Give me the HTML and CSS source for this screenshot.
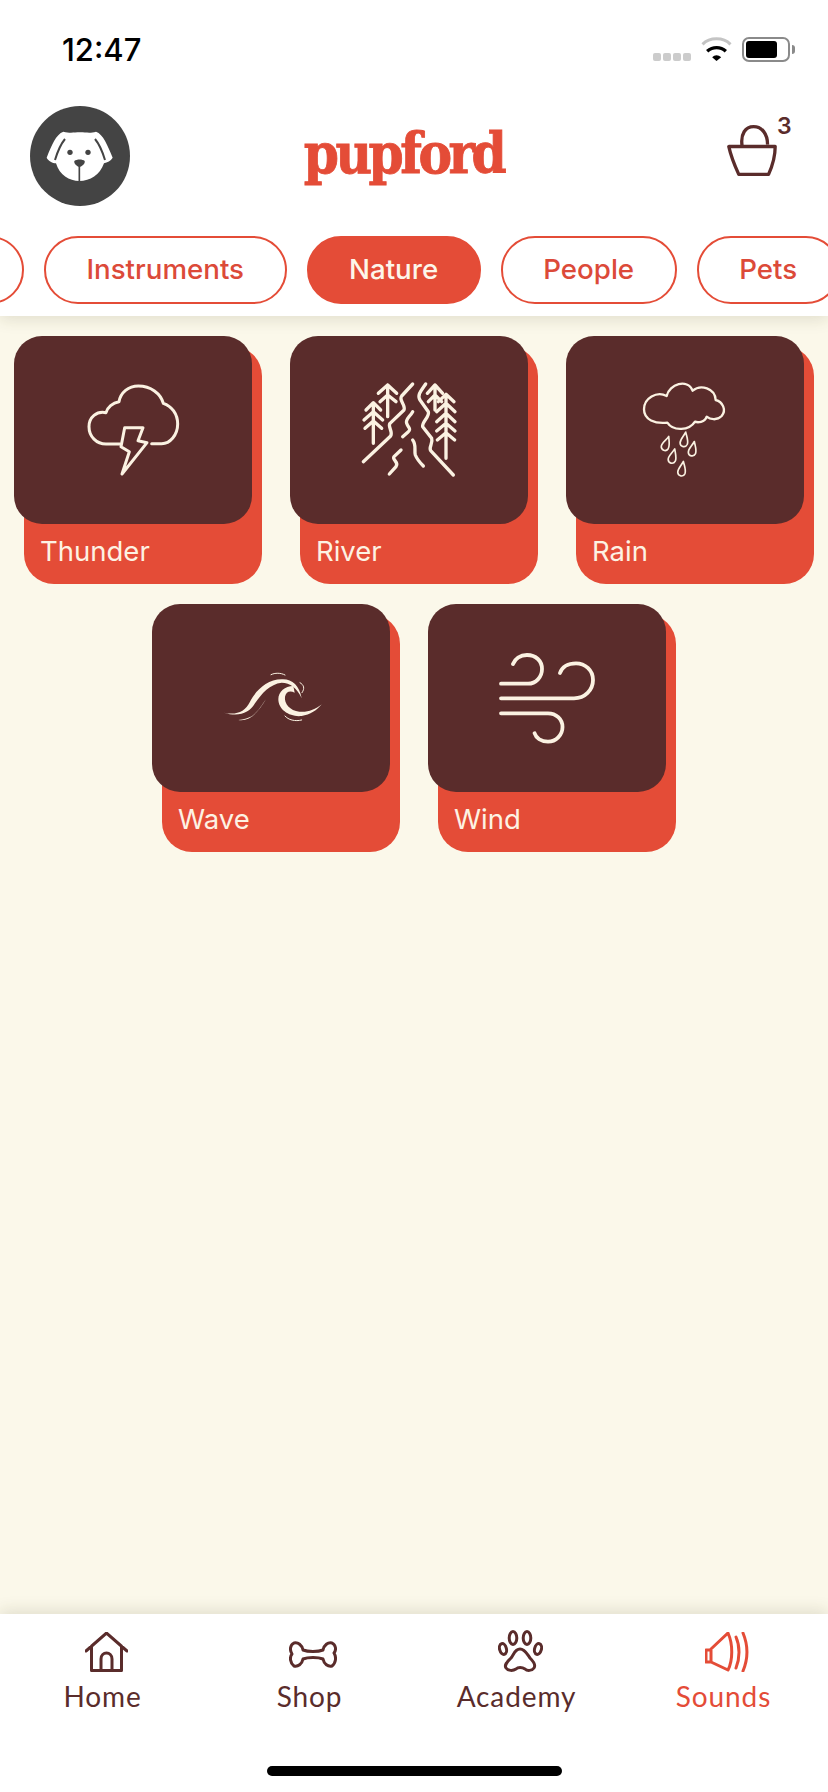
FILE: index.html
```html
<!DOCTYPE html>
<html lang="en">
<head>
    <meta charset="UTF-8">
    <meta name="viewport" content="width=device-width, initial-scale=1.0">
    <title>Pupford Sounds</title>
    <link rel="stylesheet" href="styles.css">
</head>
<body>
    <header class="top">
        <div class="status">
            <span class="time">12:47</span>
            <div class="status-icons">
                <div class="signal"><i></i><i></i><i></i><i></i></div>
                <svg class="wifi" viewBox="180 50 92 72">
                    <path d="M184 72C206 50 246 50 268 72" fill="none" stroke="#c4c4c4" stroke-width="9"/>
                    <path d="M198 93C215 78 238 78 254 93" fill="none" stroke="#000" stroke-width="10"/>
                    <path d="M213 111L226 122L240 111C232 103 220 103 213 111Z" fill="#000"/>
                </svg>
                <div class="battery"><div class="battery-level"></div></div>
                <div class="battery-nub"></div>
            </div>
        </div>
        <div class="brand">
            <svg class="avatar" viewBox="30 33 300 300">
                <circle cx="180" cy="183" r="150" fill="#444"/>
                <path d="M130 110C150 115 160 112 180 112C200 112 212 115 228 110C250 118 262 150 278 188C272 198 262 202 252 205C240 240 210 258 178 258C148 258 118 240 108 205C98 205 85 198 80 188C95 150 108 118 130 110Z" fill="#fff"/>
                <path d="M135 132C120 150 112 172 105 195M225 132C240 150 248 172 255 195" fill="none" stroke="#444" stroke-width="6"/>
                <circle cx="150" cy="172" r="8" fill="#444"/>
                <circle cx="204" cy="172" r="8" fill="#444"/>
                <path d="M163 198C170 192 188 192 194 198C196 206 186 214 178 216C171 214 161 206 163 198Z" fill="#444"/>
                <path d="M178 212V258" stroke="#444" stroke-width="5"/>
            </svg>
            <div class="logo">pupford</div>
            <div class="cart">
                <svg class="bag" viewBox="260 313 150 157">
                    <path d="M305 375C300 340 315 318 340 318C365 318 382 340 382 372M265 378H405C405 410 395 440 385 462H295C285 440 272 410 265 378Z" fill="none" stroke="#5a2c2b" stroke-width="10" stroke-linejoin="round"/>
                </svg>
                <span class="cart-count">3</span>
            </div>
        </div>
        <nav class="pills">
            <a class="pill pill-cut"></a>
            <a class="pill">Instruments</a>
            <a class="pill active">Nature</a>
            <a class="pill">People</a>
            <a class="pill">Pets</a>
        </nav>
    </header>

    <main class="sounds">
        <div class="card">
            <div class="card-back">Thunder</div>
            <div class="card-face">
                <svg viewBox="42 48 714 564">
                    <path d="M455 371H485C510 371 533 345 533 312C533 282 515 258 490 250C482 220 452 198 415 198C385 198 362 218 357 245C338 248 322 262 318 278C290 272 267 292 267 320C267 350 290 372 318 372H360"/>
                    <path d="M374 323H429L414 362L441 368L366 462L388 395L363 380Z"/>
                </svg>
            </div>
        </div>
        <div class="card">
            <div class="card-back">River</div>
            <div class="card-face">
                <svg class="bold" viewBox="-150 -72 714 564">
                    <path d="M100 130V250M78 150L100 128L122 150M72 180L100 155L128 180M75 205L100 183L125 205"/>
                    <path d="M143 75V170M115 100L143 75L170 100M120 125L143 105L168 125"/>
                    <path d="M285 75V150M262 100L285 75L308 100M265 125L285 105L305 125"/>
                    <path d="M318 105V295M295 125L318 103L342 125M290 155L318 130L345 155M290 185L318 160L345 185M290 213L318 190L345 213M292 240L318 218L344 240"/>
                    <path d="M218 72L185 108C175 120 198 135 192 150L150 190C142 200 160 215 152 228L70 305"/>
                    <path d="M257 72C245 90 230 105 240 120L265 155C270 170 245 185 248 200L275 235C280 250 265 262 272 272L340 345"/>
                    <path d="M218 155C210 170 195 178 200 190C205 205 215 205 205 215L188 230"/>
                    <path d="M218 240C230 255 222 270 226 285C232 300 240 308 250 318"/>
                    <path d="M183 270L162 290C155 300 178 305 168 320L148 342"/>
                </svg>
            </div>
        </div>
        <div class="card">
            <div class="card-back">Rain</div>
            <div class="card-face">
                <svg class="light" viewBox="438 48 714 564">
                    <defs>
                        <path id="drop" d="M0 -24C6 -10 13 0 11 11C8 23 -8 23 -11 11C-13 0 -4 -10 0 -24Z"/>
                    </defs>
                    <path d="M742 308C705 312 672 300 672 268C672 235 710 212 740 228C748 192 802 175 818 212C842 192 885 205 887 240C908 245 920 270 905 288C890 303 870 298 860 290C855 308 832 308 825 305C808 332 760 335 742 308Z"/>
                    <g class="drops">
                        <use href="#drop" transform="translate(738 372) rotate(20)"/>
                        <use href="#drop" transform="translate(793 360) rotate(10)"/>
                        <use href="#drop" transform="translate(818 388) rotate(12)"/>
                        <use href="#drop" transform="translate(758 410) rotate(15)"/>
                        <use href="#drop" transform="translate(786 448) rotate(10)"/>
                    </g>
                </svg>
            </div>
        </div>
        <div class="card">
            <div class="card-back">Wave</div>
            <div class="card-face">
                <svg class="solid" viewBox="-174 -168 714 564">
                    <path d="M42 158C80 166 105 155 120 125C135 95 170 58 215 58C245 56 268 75 275 115C262 85 240 68 215 68C180 72 155 100 135 130C118 160 85 172 42 158Z"/>
                    <path d="M250 78C225 78 205 95 205 118C205 150 240 172 275 168C300 165 322 150 335 133C315 150 290 158 268 155C240 152 222 130 225 110C228 95 240 90 254 98Z"/>
                    <path d="M85 180C115 185 140 165 168 118C155 135 148 150 130 165C118 175 100 178 85 180Z"/>
                    <path class="thin" d="M183 44C195 38 212 38 225 45M270 68C282 75 285 85 276 98M225 168C235 180 255 185 275 180"/>
                </svg>
            </div>
        </div>
        <div class="card">
            <div class="card-back">Wind</div>
            <div class="card-face">
                <svg class="wind" viewBox="0 0 238 188">
                    <path d="M73 79.7H100C108 79.7 114 73 114 65C114 57 108 51 99 51C92 51 87 55 85 60"/>
                    <path d="M73 94.3H146C157 94.3 165 86 165 76C165 66 157 59.3 148 59.3C140 59.3 134 63 132 69"/>
                    <path d="M73 109.3H120C128 109.3 134.5 115 134.5 123C134.5 131 128 137.7 120 137.7C113 137.7 108 134 106.6 129.3"/>
                </svg>
            </div>
        </div>
    </main>

    <footer class="tabbar">
        <div class="tabs">
            <a class="tab">
                <svg width="43" height="40" viewBox="1 0 43 40">
                    <path d="M2 19L22.5 1L43 19M7.5 14V38.5H37.5V14M17 38V27C17 19 28 19 28 27V38"/>
                </svg>
                <span>Home</span>
            </a>
            <a class="tab">
                <svg class="bone" width="48" height="27" viewBox="0 0 48 27">
                    <path d="M14 9C19 11 29 11 34 9C35 4 39 1 43 2C47 4 47.5 9 45 12C47.5 16 47 22 43 25C39 26 35 23 34 18C29 16 19 16 14 18C13 23 9 26 5 25C1 22 .5 16 3 13C.5 9 1 4 5 2C9 1 13 4 14 9Z"/>
                </svg>
                <span>Shop</span>
            </a>
            <a class="tab">
                <svg width="45" height="42" viewBox="0 0 45 42">
                    <ellipse cx="5" cy="19" rx="3.4" ry="5.5" transform="rotate(-15 5 19)"/>
                    <ellipse cx="15" cy="8" rx="3.8" ry="6.5"/>
                    <ellipse cx="29" cy="8" rx="3.8" ry="6.5"/>
                    <ellipse cx="40" cy="19" rx="3.4" ry="5.5" transform="rotate(15 40 19)"/>
                    <path d="M22 19C27 19 29 24 32 28C36 32 38 35 36 38C34 41 29 41 27 39C24 37 20 37 18 39C15 41 10 41 8 38C6 35 9 32 13 28C16 24 17 19 22 19Z"/>
                </svg>
                <span>Academy</span>
            </a>
            <a class="tab active">
                <svg width="45" height="40" viewBox="0 0 45 40">
                    <path d="M1 18H6V30H1ZM6 17L23 1C28 12 28 28 23 38L6 30M31 5C35 14 35 26 31 36M38 1C43 13 43 27 38 39"/>
                </svg>
                <span>Sounds</span>
            </a>
        </div>
        <div class="home-bar"></div>
    </footer>
</body>
</html>
```

FILE: styles.css
```css
body {
    font-family: 'Inter', sans-serif;
    background-color: #fbf8ea;
    margin: 0;
    padding: 0;
    width: 828px;
    height: 1792px;
    display: flex;
    flex-direction: column;
    overflow: hidden;
}
.top {
    background-color: white;
    height: 316px;
    box-shadow: 0 4px 14px rgba(60, 60, 20, 0.13);
    position: relative;
    z-index: 1;
}
.status {
    display: flex;
    justify-content: space-between;
    align-items: center;
    height: 50px;
    padding: 24px 33px 0 62px;
}
.time {
    font-size: 31px;
    font-weight: 500;
    color: black;
}
.status-icons {
    display: flex;
    align-items: flex-start;
}
.signal {
    display: flex;
    gap: 2px;
    margin: 16px 10px 0 0;
}
.signal i {
    width: 8px;
    height: 8px;
    background-color: #ccc;
    border-radius: 2px;
}
.wifi {
    width: 31px;
    height: 24px;
    margin-right: 10px;
}
.battery {
    box-sizing: border-box;
    width: 48px;
    height: 25px;
    padding: 2px;
    border: 2px solid #8a8a8a;
    border-radius: 7px;
}
.battery-level {
    width: 31px;
    height: 17px;
    background-color: black;
    border-radius: 3px;
}
.battery-nub {
    width: 3px;
    height: 9px;
    margin: 8px 0 0 2px;
    background-color: #8a8a8a;
    border-radius: 0 3px 3px 0;
}
.brand {
    display: grid;
    grid-template-columns: 100px 1fr 49px;
    align-items: center;
    padding: 32px 52px 0 30px;
}
.avatar {
    display: block;
    width: 100px;
    height: 100px;
}
.logo {
    justify-self: center;
    margin: 0 50px 6px 0;
    font-family: 'DejaVu Serif Condensed', 'DejaVu Serif', serif;
    font-weight: bold;
    font-size: 56px;
    line-height: 60px;
    letter-spacing: -3.5px;
    -webkit-text-stroke: 0.8px #e44c37;
    color: #e44c37;
}
.cart {
    position: relative;
    height: 52px;
    margin-bottom: 10px;
}
.bag {
    display: block;
    width: 50px;
    height: 52px;
}
.cart-count {
    position: absolute;
    left: 50px;
    top: -13px;
    font-size: 23px;
    font-weight: 600;
    color: #5a2c2b;
}
.pills {
    display: flex;
    gap: 20px;
    margin-top: 30px;
}
.pill {
    box-sizing: border-box;
    flex-shrink: 0;
    height: 68px;
    padding: 0 40.5px;
    border: 2px solid #e44c37;
    border-radius: 34px;
    font-size: 27.7px;
    font-weight: 500;
    line-height: 62px;
    color: #dc4a39;
}
.pill.active {
    background-color: #e44c37;
    color: #fdf6ea;
}
.pill-cut {
    width: 100px;
    margin-left: -76px;
}
.sounds {
    flex: 1;
    display: flex;
    flex-wrap: wrap;
    justify-content: center;
    align-content: flex-start;
    gap: 20px 28px;
    padding: 20px 14px 0;
}
.card {
    position: relative;
    width: 248px;
    height: 248px;
    padding: 10px 0 0 10px;
    box-sizing: border-box;
}
.card-back {
    display: flex;
    align-items: flex-end;
    box-sizing: border-box;
    height: 238px;
    padding: 0 0 16px 16px;
    background-color: #e44c37;
    border-radius: 30px;
    font-size: 27.5px;
    line-height: 34px;
    color: #fdf2e3;
}
.card-face {
    position: absolute;
    top: 0;
    left: 0;
    width: 238px;
    height: 188px;
    background-color: #5a2c2b;
    border-radius: 28px;
}
.card-face svg {
    display: block;
    width: 100%;
    height: 100%;
    fill: none;
    stroke: #fbf2e2;
    stroke-width: 9;
    stroke-linecap: round;
    stroke-linejoin: round;
}
.card-face svg.bold {
    stroke-width: 10;
}
.card-face svg.light {
    stroke-width: 7;
}
.card-face svg.wind {
    stroke-width: 3.8;
}
.card-face svg .drops {
    stroke-width: 5;
}
.card-face svg.solid {
    fill: #fbf2e2;
    stroke: none;
}
.card-face svg .thin {
    fill: none;
    stroke: #fbf2e2;
    stroke-width: 3;
}
.tabbar {
    background-color: white;
    height: 178px;
    box-shadow: 0 -4px 14px rgba(60, 60, 20, 0.13);
    position: relative;
}
.tabs {
    display: grid;
    grid-template-columns: repeat(4, 1fr);
    padding: 14px 0 0;
}
.tab {
    display: flex;
    flex-direction: column;
    align-items: center;
    justify-content: flex-end;
    height: 86px;
    margin-left: -2px;
    font-family: 'Lato', sans-serif;
    font-size: 28px;
    letter-spacing: 0.9px;
    line-height: 36px;
    color: #5a2c2b;
}
.tab svg {
    fill: none;
    stroke: currentColor;
    stroke-width: 3;
    stroke-linejoin: round;
    stroke-linecap: round;
    margin: 0 0 6px 7px;
}
.tab svg.bone {
    margin-bottom: 10px;
}
.tab.active {
    color: #e44c37;
}
.home-bar {
    width: 295px;
    height: 10px;
    margin: 52px auto 0;
    background-color: black;
    border-radius: 5px;
}
```
